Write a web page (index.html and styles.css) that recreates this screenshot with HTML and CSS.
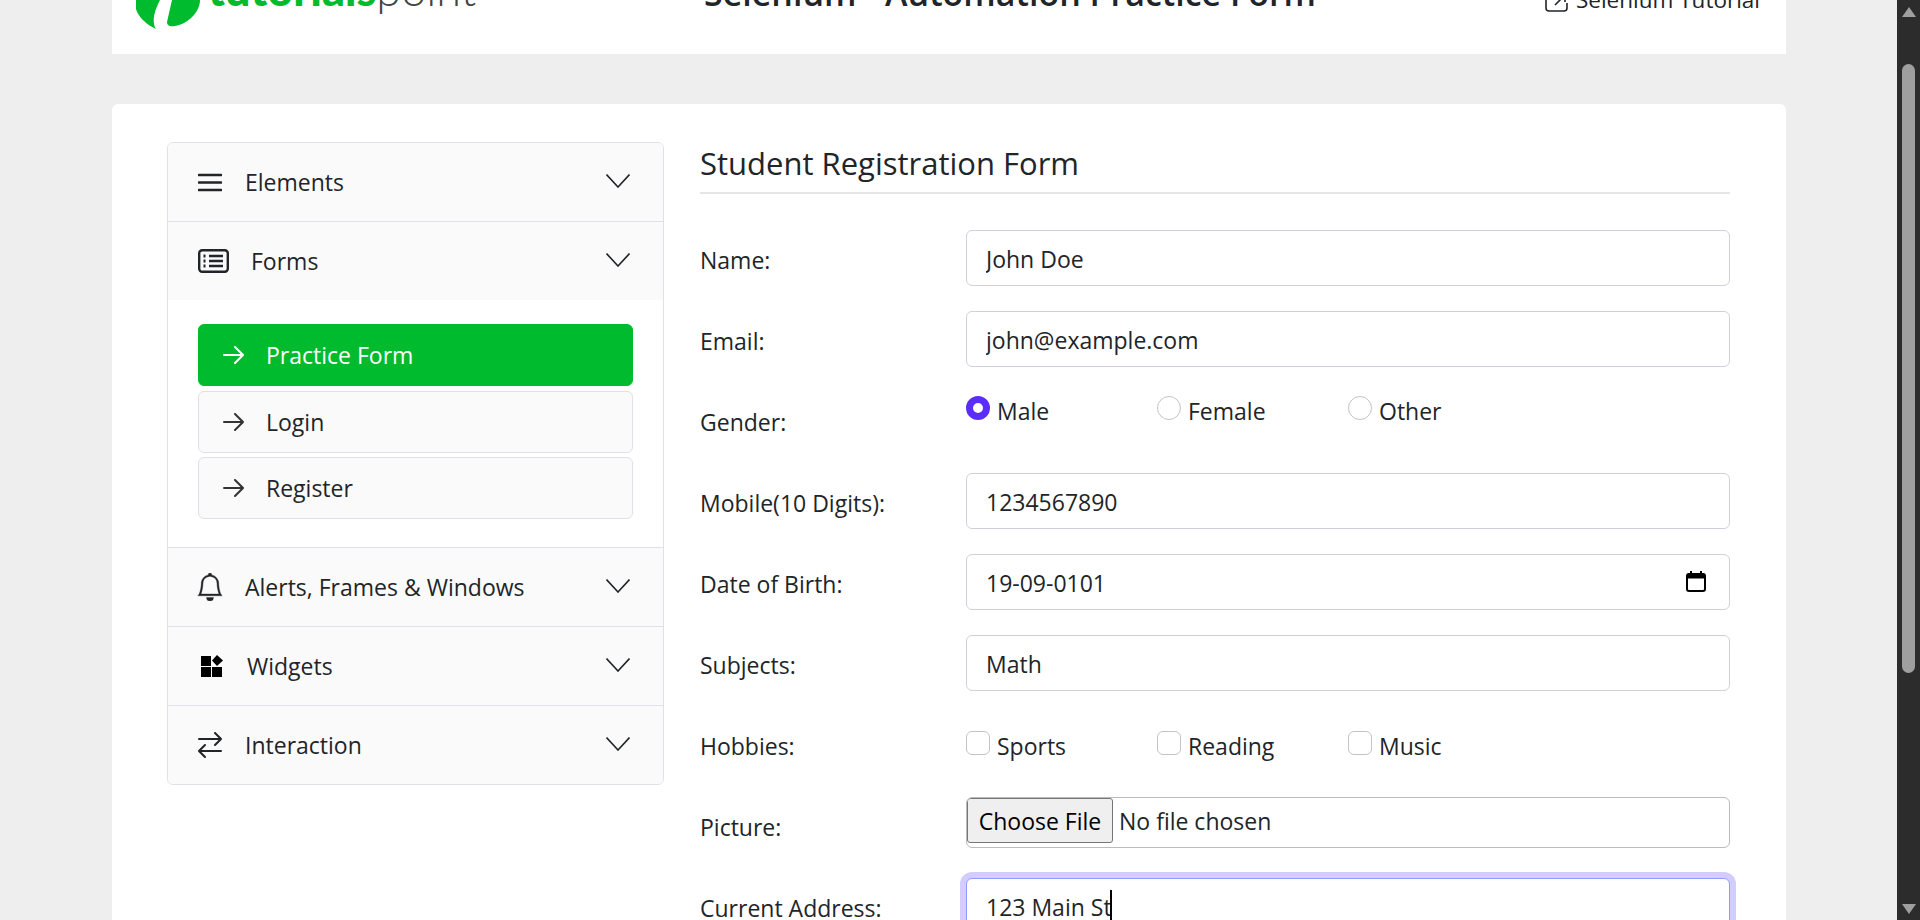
FILE: index.html
```html
<!DOCTYPE html>
<html lang="en">
<head>
    <meta charset="UTF-8">
    <meta name="viewport" content="width=device-width, initial-scale=1.0">
    <title>Selenium - Automation Practice Form</title>
    <link rel="stylesheet" href="styles.css">
</head>
<body>

    <div class="page">
        <header class="topbar">
            <a class="logo" href="#">
                <svg class="logo-leaf" width="64" height="114" viewBox="0 0 64 114">
                    <path d="M0 60C-4 71 8 84 20 89C15 81 19 70 24 60Z" fill="#00bb2d"/>
                    <path d="M36 60L31 82C31 86 35 87 39 86C52 84 64 72 64 60Z" fill="#00bb2d"/>
                </svg>
                <span class="logo-text"><b>tutorials</b>point</span>
            </a>
            <h1 class="topbar-title">Selenium - Automation Practice Form</h1>
            <a class="topbar-link" href="#">
                <svg width="24" height="20" viewBox="0 0 24 20" fill="none" stroke="#212529" stroke-width="1.6">
                    <path d="M8 1H4a3 3 0 0 0-3 3v11a3 3 0 0 0 3 3h15a3 3 0 0 0 3-3v-5"/>
                    <path d="M10 12L20 2M13 2h7v7"/>
                </svg>
                Selenium Tutorial
            </a>
        </header>

        <main class="card">
            <aside class="accordion">
                <div class="acc-head">
                    <svg class="icon" width="24" height="19" viewBox="0 0 24 19" stroke="#212529" stroke-width="2.6" stroke-linecap="round">
                        <path d="M1 2h22M1 9.500h22M1 17h22"/>
                    </svg>
                    <span class="acc-label">Elements</span>
                    <svg class="chev" width="24" height="14" viewBox="0 0 24 14" fill="none" stroke="#212529" stroke-width="1.6"><path d="M0.5 0.5L12 13L23.5 0.5"/></svg>
                </div>
                <div class="acc-head acc-forms">
                    <svg class="icon" width="31" height="24" viewBox="0 0 31 24" fill="none" stroke="#212529" stroke-width="2.4">
                        <rect x="1.200" y="1.200" width="28.600" height="21.600" rx="3"/>
                        <path d="M11 7h14M11 12h14M11 17h14"/>
                        <path d="M5.500 7h2M5.500 12h2M5.500 17h2" stroke-width="2.800"/>
                    </svg>
                    <span class="acc-label">Forms</span>
                    <svg class="chev" width="24" height="14" viewBox="0 0 24 14" fill="none" stroke="#212529" stroke-width="1.6"><path d="M0.5 0.5L12 13L23.5 0.5"/></svg>
                </div>
                <div class="acc-body">
                    <a class="sub-item active" href="#">
                        <svg width="21" height="18" viewBox="0 0 21 18" fill="none" stroke="#fff" stroke-width="2" stroke-linecap="round"><path d="M1 9h19M12 1l8 8-8 8"/></svg>
                        Practice Form
                    </a>
                    <a class="sub-item" href="#">
                        <svg width="21" height="18" viewBox="0 0 21 18" fill="none" stroke="#333" stroke-width="2" stroke-linecap="round"><path d="M1 9h19M12 1l8 8-8 8"/></svg>
                        Login
                    </a>
                    <a class="sub-item" href="#">
                        <svg width="21" height="18" viewBox="0 0 21 18" fill="none" stroke="#333" stroke-width="2" stroke-linecap="round"><path d="M1 9h19M12 1l8 8-8 8"/></svg>
                        Register
                    </a>
                </div>
                <div class="acc-head acc-line">
                    <svg class="icon icon-bell" width="28" height="28" viewBox="0 0 16 16" fill="#212529" stroke="#212529" stroke-width="0.2">
                        <path d="M8 16a2 2 0 0 0 2-2H6a2 2 0 0 0 2 2zM8 1.918l-.797.161A4.002 4.002 0 0 0 4 6c0 .628-.134 2.197-.459 3.742-.16.767-.376 1.566-.663 2.258h10.244c-.287-.692-.502-1.49-.663-2.258C12.134 8.197 12 6.628 12 6a4.002 4.002 0 0 0-3.203-3.92L8 1.917zM14.22 12c.223.447.481.801.78 1H1c.299-.199.557-.553.78-1C2.68 10.2 3 6.88 3 6c0-2.42 1.72-4.44 4.005-4.901a1 1 0 1 1 1.99 0A5.002 5.002 0 0 1 13 6c0 .88.32 4.2 1.22 6z"/>
                    </svg>
                    <span class="acc-label">Alerts, Frames &amp; Windows</span>
                    <svg class="chev" width="24" height="14" viewBox="0 0 24 14" fill="none" stroke="#212529" stroke-width="1.6"><path d="M0.5 0.5L12 13L23.5 0.5"/></svg>
                </div>
                <div class="acc-head acc-line acc-widgets">
                    <svg class="icon" width="22" height="22" viewBox="0 0 22 22" fill="#000">
                        <rect x="0" y="1" width="10" height="10"/>
                        <rect x="0" y="12" width="10" height="10"/>
                        <rect x="11" y="12" width="10" height="10"/>
                        <path d="M16 0l6 5.5-6 5.500-5-5.500z"/>
                    </svg>
                    <span class="acc-label">Widgets</span>
                    <svg class="chev" width="24" height="14" viewBox="0 0 24 14" fill="none" stroke="#212529" stroke-width="1.6"><path d="M0.5 0.5L12 13L23.5 0.5"/></svg>
                </div>
                <div class="acc-head acc-line">
                    <svg class="icon" width="24" height="26" viewBox="0 0 24 26" fill="none" stroke="#212529" stroke-width="2" stroke-linecap="round">
                        <path d="M1 7h22M17 1l6 6-6 6M23 19H1M7 13l-6 6 6 6"/>
                    </svg>
                    <span class="acc-label">Interaction</span>
                    <svg class="chev" width="24" height="14" viewBox="0 0 24 14" fill="none" stroke="#212529" stroke-width="1.6"><path d="M0.5 0.5L12 13L23.5 0.5"/></svg>
                </div>
            </aside>

            <form class="form">
                <h2 class="form-title">Student Registration Form</h2>

                <div class="row">
                    <label class="row-label">Name:</label>
                    <input class="field" type="text" value="John Doe">
                </div>
                <div class="row">
                    <label class="row-label">Email:</label>
                    <input class="field" type="text" value="john@example.com">
                </div>
                <div class="row">
                    <label class="row-label">Gender:</label>
                    <div class="choices choices-gender">
                        <label class="choice"><input type="radio" name="gender" checked>Male</label>
                        <label class="choice"><input type="radio" name="gender">Female</label>
                        <label class="choice"><input type="radio" name="gender">Other</label>
                    </div>
                </div>
                <div class="row">
                    <label class="row-label">Mobile(10 Digits):</label>
                    <input class="field" type="text" value="1234567890">
                </div>
                <div class="row">
                    <label class="row-label">Date of Birth:</label>
                    <div class="date-wrap">
                        <input class="field" type="text" value="19-09-0101">
                        <svg class="date-icon" width="20" height="21" viewBox="0 0 20 21" fill="none" stroke="#000">
                            <rect x="1" y="3" width="18" height="17" rx="2" stroke-width="2"/>
                            <path d="M1 5.500h18" stroke-width="4"/>
                            <path d="M5 0v3M15 0v3" stroke-width="2"/>
                        </svg>
                    </div>
                </div>
                <div class="row">
                    <label class="row-label">Subjects:</label>
                    <input class="field" type="text" value="Math">
                </div>
                <div class="row">
                    <label class="row-label">Hobbies:</label>
                    <div class="choices choices-hobbies">
                        <label class="choice"><input type="checkbox">Sports</label>
                        <label class="choice"><input type="checkbox">Reading</label>
                        <label class="choice"><input type="checkbox">Music</label>
                    </div>
                </div>
                <div class="row">
                    <label class="row-label">Picture:</label>
                    <input class="file" type="file">
                </div>
                <div class="row">
                    <label class="row-label">Current Address:</label>
                    <div class="address">
                        <textarea class="address-input" rows="3">123 Main St</textarea>
                        <span class="caret"></span>
                    </div>
                </div>
            </form>
        </main>
    </div>

    <div class="scrollbar">
        <span class="arrow-up"></span>
        <span class="thumb"></span>
        <span class="arrow-down"></span>
    </div>

</body>
</html>
```

FILE: styles.css
```css
* {
    box-sizing: border-box;
}

html, body {
    height: 100%;
}

body {
    display: flex;
    margin: 0;
    height: 920px;
    overflow: hidden;
    background-color: #eee;
    color: #212529;
    font-family: "Open Sans", "Noto Sans", sans-serif;
    font-size: 23px;
    line-height: 30px;
}

a {
    color: inherit;
    text-decoration: none;
}

.page {
    flex: 1;
    min-width: 0;
    padding: 0 111px 0 112px;
    overflow: hidden;
}

/* page is scrolled down a bit, top of the bar is cut off */
.topbar {
    display: grid;
    grid-template-columns: 592px 1fr auto;
    height: 114px;
    margin-top: -60px;
    padding-right: 26px;
    background-color: #fff;
}

.logo {
    display: flex;
    padding-left: 24px;
}

.logo-leaf {
    flex: none;
}

.logo-text {
    margin: 24px 0 0 8px;
    font-family: Lato, sans-serif;
    font-size: 45px;
    line-height: 50px;
    font-weight: 300;
    color: #444;
}

.logo-text b {
    font-weight: 900;
    color: #00bb2d;
}

.topbar-title {
    margin: 33px 0 0;
    font-size: 34px;
    line-height: 40px;
    font-weight: 600;
    white-space: nowrap;
}

.topbar-link {
    display: flex;
    gap: 7px;
    align-items: flex-start;
    padding-top: 45px;
    font-size: 22.5px;
    white-space: nowrap;
}

.topbar-link svg {
    margin-top: 8px;
}

.card {
    display: flex;
    align-items: flex-start;
    gap: 36px;
    margin-top: 50px;
    min-height: 1000px;
    padding: 38px 56px 0 55px;
    background-color: #fff;
    border-radius: 6px;
}

/* sidebar */
.accordion {
    flex: none;
    width: 497px;
    overflow: hidden;
    background-color: #fff;
    border: 1px solid #dee2e6;
    border-radius: 6px;
}

.acc-head {
    display: flex;
    align-items: center;
    height: 78px;
    padding: 0 33px 0 30px;
    background-color: #fafafa;
}

.acc-forms {
    height: 79px;
    border-top: 1px solid #dee2e6;
}

.acc-line {
    height: 79px;
    border-top: 1px solid #dee2e6;
}

.icon {
    flex: none;
}

.acc-label {
    flex: 1;
    margin-left: 23px;
}

.acc-forms .acc-label {
    margin-left: 22px;
}

.acc-widgets .icon {
    margin-left: 3px;
}

.acc-widgets .acc-label {
    margin-left: 24px;
}

.icon-bell {
    margin: 0 -2px;
}

.chev {
    flex: none;
    margin-top: -2px;
}

.acc-body {
    height: 247px;
    padding: 24px 30px 0;
}

.sub-item {
    display: flex;
    align-items: center;
    gap: 22px;
    height: 62px;
    margin-bottom: 4.5px;
    padding-left: 24px;
    background-color: #fafafa;
    border: 1px solid #dee2e6;
    border-radius: 6px;
}

.sub-item.active {
    background-color: #00bb2d;
    border-color: #00bb2d;
    color: #fff;
}

/* form */
.form {
    flex: 1;
    min-width: 0;
}

.form-title {
    height: 52px;
    margin: 0 0 36px;
    font-size: 31px;
    line-height: 42px;
    font-weight: 400;
    border-bottom: 2px solid #e6e6e6;
}

.row {
    display: flex;
    margin-bottom: 25px;
    min-height: 56px;
}

.row-label {
    flex: none;
    width: 266px;
    padding-top: 15px;
}

.field {
    display: block;
    width: 100%;
    height: 56px;
    padding: 2px 19px 0;
    background-color: #fff;
    border: 1px solid #d0d0dc;
    border-radius: 6px;
    color: #212529;
    font: inherit;
}

.date-wrap {
    position: relative;
    flex: 1;
}

.date-icon {
    position: absolute;
    top: 17px;
    right: 24px;
}

.choices {
    flex: 1;
    display: grid;
    grid-template-columns: repeat(3, 191px);
}

.choices-gender {
    padding-top: 4px;
}

.choices-hobbies {
    padding-top: 15px;
}

.choice {
    display: flex;
    align-items: flex-start;
    gap: 7px;
    height: 40px;
}

.choice input {
    appearance: none;
    flex: none;
    width: 24px;
    height: 24px;
    margin: 0;
    background-color: #fff;
    border: 1px solid #c4c4c4;
}

.choice input[type="checkbox"] {
    border-radius: 6px;
}

.choice input[type="radio"] {
    border-radius: 50%;
}

.choice input[type="radio"]:checked {
    border: 7px solid #5b2dfb;
}

.file {
    display: block;
    flex: 1;
    height: 51px;
    padding: 0;
    background-color: #fff;
    border: 1px solid #bbb;
    border-radius: 6px;
    font: inherit;
    color: #212529;
}

.file::file-selector-button {
    width: 146px;
    height: 45px;
    margin: 0 6px 0 0;
    padding: 0;
    background-color: #efefef;
    border: 1px solid #767676;
    border-radius: 3px;
    font: inherit;
    color: #000;
}

.address {
    position: relative;
    flex: 1;
}

.address-input {
    display: block;
    width: 100%;
    padding: 13px 19px;
    background-color: #fff;
    border: 1px solid #8f9cff;
    border-radius: 6px;
    box-shadow: 0 0 0 6px #d2ccff;
    outline: none;
    resize: none;
    font: inherit;
    color: #212529;
}

.caret {
    position: absolute;
    top: 12px;
    left: 144px;
    width: 1.5px;
    height: 30px;
    background-color: #000;
}

/* windows style dark scrollbar */
.scrollbar {
    flex: none;
    display: flex;
    flex-direction: column;
    align-items: center;
    width: 23px;
    padding: 7px 0 6px;
    background-color: #2c2c2c;
}

.arrow-up, .arrow-down {
    flex: none;
    width: 0;
    height: 0;
    border-left: 7px solid transparent;
    border-right: 7px solid transparent;
}

.arrow-up {
    border-bottom: 10px solid #9f9f9f;
}

.arrow-down {
    margin-top: auto;
    border-top: 10px solid #9f9f9f;
}

.thumb {
    flex: none;
    width: 13px;
    height: 609px;
    margin-top: 47px;
    background-color: #9f9f9f;
    border-radius: 7px;
}
```
